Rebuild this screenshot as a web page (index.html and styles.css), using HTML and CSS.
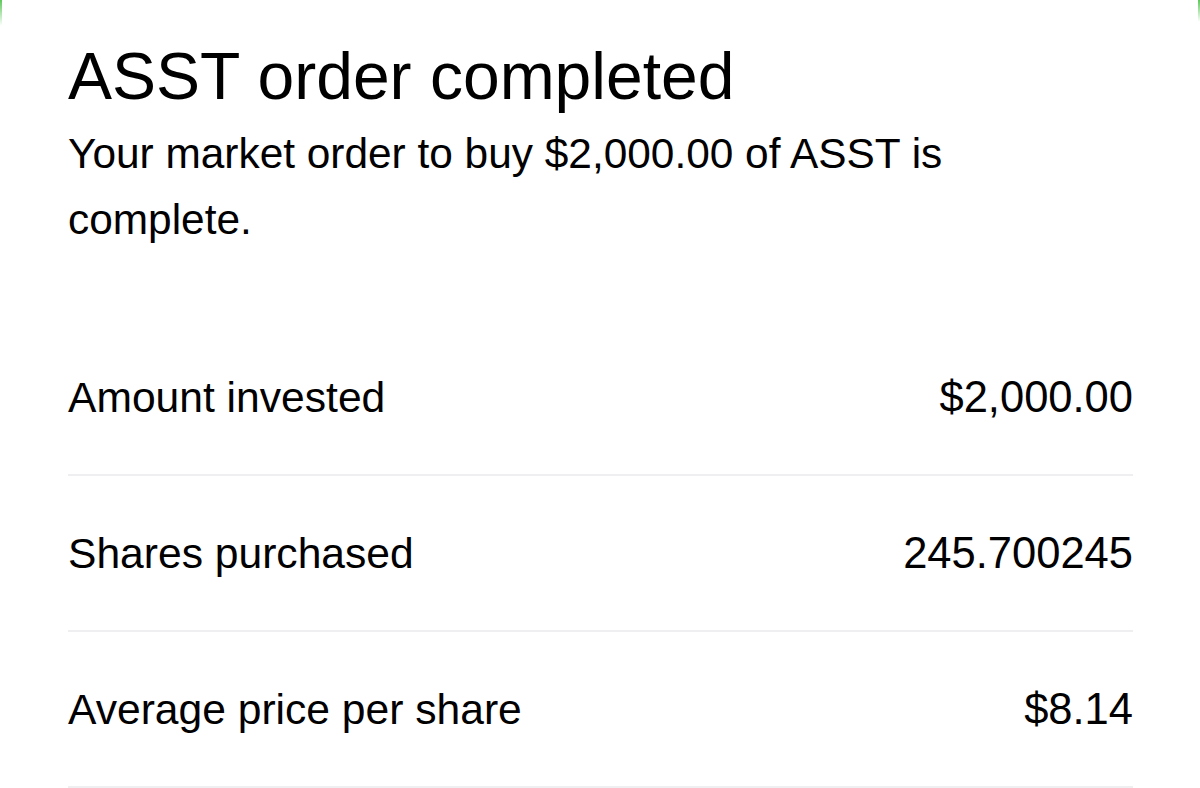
FILE: index.html
```html
<!DOCTYPE html>
<html lang="en">
<head>
<meta charset="utf-8">
<title>ASST order completed</title>
<link rel="stylesheet" href="styles.css">
</head>
<body>
<span class="edge edge-left"></span>
<span class="edge edge-right"></span>
<main class="sheet">
  <header class="head">
    <h1 class="title">ASST order completed</h1>
    <p class="subtitle">Your market order to buy $2,000.00 of ASST is complete.</p>
  </header>
  <ul class="details">
    <li class="row"><span class="label">Amount invested</span><span class="value">$2,000.00</span></li>
    <li class="row"><span class="label">Shares purchased</span><span class="value">245.700245</span></li>
    <li class="row"><span class="label">Average price per share</span><span class="value">$8.14</span></li>
  </ul>
</main>
</body>
</html>
```

FILE: styles.css
```css
html, body {
  margin: 0;
  padding: 0;
  background: #ffffff;
}
body {
  position: relative;
  width: 1200px;
  height: 788px;
  overflow: hidden;
  font-family: "Liberation Sans", Arial, sans-serif;
  color: #000000;
}
.edge {
  position: absolute;
  top: 0;
  width: 2px;
  background: linear-gradient(to bottom, #5ec85a, rgba(94, 200, 90, 0));
}
.edge-left {
  left: 0;
  height: 26px;
}
.edge-right {
  right: 0;
  height: 22px;
}
.sheet {
  padding: 40px 67px 0 68px;
}
.head {
  display: flex;
  flex-direction: column;
  gap: 9px;
}
.title {
  margin: 0;
  font-size: 66px;
  line-height: 72px;
  font-weight: 400;
  letter-spacing: 0;
}
.subtitle {
  margin: 0;
  width: 900px;
  font-size: 42.4px;
  line-height: 66px;
}
.details {
  list-style: none;
  margin: 67px 0 0 0;
  padding: 0;
}
.row {
  display: flex;
  justify-content: space-between;
  align-items: center;
  padding: 53px 0 53px 0;
  font-size: 42.6px;
  line-height: 48px;
  border-bottom: 2px solid #efeff2;
}
.value {
  font-size: 43.5px;
  text-align: right;
}
```
